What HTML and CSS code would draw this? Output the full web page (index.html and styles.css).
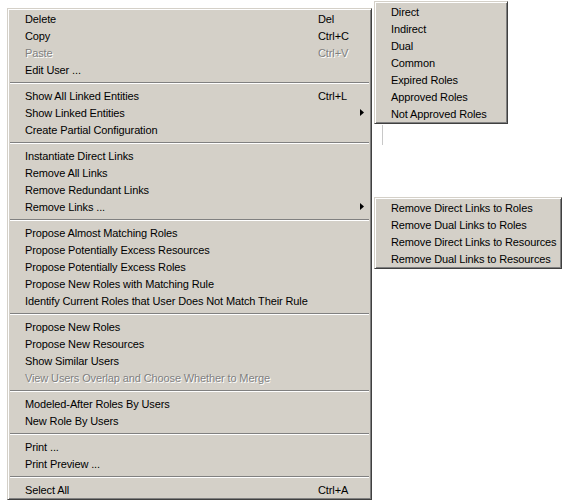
FILE: index.html
```html
<!DOCTYPE html>
<html>
<head>
<meta charset="utf-8">
<link rel="stylesheet" href="styles.css">
</head>
<body>
<div class="desk">
  <div class="menu main">
    <div class="item"><span class="label">Delete</span><span class="key">Del</span></div>
    <div class="item"><span class="label">Copy</span><span class="key">Ctrl+C</span></div>
    <div class="item disabled"><span class="label">Paste</span><span class="key">Ctrl+V</span></div>
    <div class="item"><span class="label">Edit User ...</span></div>
    <div class="sep"></div>
    <div class="item"><span class="label">Show All Linked Entities</span><span class="key">Ctrl+L</span></div>
    <div class="item"><span class="label">Show Linked Entities</span><svg class="arrow" width="4" height="7" viewBox="0 0 4 7"><polygon points="0,0 4,3.5 0,7" fill="#000"/></svg></div>
    <div class="item"><span class="label">Create Partial Configuration</span></div>
    <div class="sep"></div>
    <div class="item"><span class="label">Instantiate Direct Links</span></div>
    <div class="item"><span class="label">Remove All Links</span></div>
    <div class="item"><span class="label">Remove Redundant Links</span></div>
    <div class="item"><span class="label">Remove Links ...</span><svg class="arrow" width="4" height="7" viewBox="0 0 4 7"><polygon points="0,0 4,3.5 0,7" fill="#000"/></svg></div>
    <div class="sep"></div>
    <div class="item"><span class="label">Propose Almost Matching Roles</span></div>
    <div class="item"><span class="label">Propose Potentially Excess Resources</span></div>
    <div class="item"><span class="label">Propose Potentially Excess Roles</span></div>
    <div class="item"><span class="label">Propose New Roles with Matching Rule</span></div>
    <div class="item"><span class="label">Identify Current Roles that User Does Not Match Their Rule</span></div>
    <div class="sep"></div>
    <div class="item"><span class="label">Propose New Roles</span></div>
    <div class="item"><span class="label">Propose New Resources</span></div>
    <div class="item"><span class="label">Show Similar Users</span></div>
    <div class="item disabled"><span class="label">View Users Overlap and Choose Whether to Merge</span></div>
    <div class="sep"></div>
    <div class="item"><span class="label">Modeled-After Roles By Users</span></div>
    <div class="item"><span class="label">New Role By Users</span></div>
    <div class="sep"></div>
    <div class="item"><span class="label">Print ...</span></div>
    <div class="item"><span class="label">Print Preview ...</span></div>
    <div class="sep"></div>
    <div class="item"><span class="label">Select All</span><span class="key">Ctrl+A</span></div>
  </div>

  <div class="menu sub sub-linked">
    <div class="item"><span class="label">Direct</span></div>
    <div class="item"><span class="label">Indirect</span></div>
    <div class="item"><span class="label">Dual</span></div>
    <div class="item"><span class="label">Common</span></div>
    <div class="item"><span class="label">Expired Roles</span></div>
    <div class="item"><span class="label">Approved Roles</span></div>
    <div class="item"><span class="label">Not Approved Roles</span></div>
  </div>
  <div class="trace"></div>

  <div class="menu sub sub-remove">
    <div class="item"><span class="label">Remove Direct Links to Roles</span></div>
    <div class="item"><span class="label">Remove Dual Links to Roles</span></div>
    <div class="item"><span class="label">Remove Direct Links to Resources</span></div>
    <div class="item"><span class="label">Remove Dual Links to Resources</span></div>
  </div>
</div>
</body>
</html>
```

FILE: styles.css
```css
html, body {
  margin: 0;
  padding: 0;
  background: #fff;
}

.desk {
  position: relative;
  width: 562px;
  height: 504px;
  overflow: hidden;
  font-family: "Liberation Sans", Arial, sans-serif;
  font-size: 11px;
  letter-spacing: -0.12px;
  color: #000;
}

.menu {
  position: absolute;
  box-sizing: border-box;
  display: flex;
  flex-direction: column;
  background: #d4d0c8;
  border: 1px solid;
  border-color: #d4d0c8 #404040 #404040 #d4d0c8;
  box-shadow: inset 1px 1px #fff, inset -1px -1px #808080;
  padding: 1px;
}

.main {
  left: 7px;
  top: 8px;
  width: 365px;
}

.sub-linked {
  left: 374px;
  top: 1px;
  width: 134px;
}

.sub-remove {
  left: 374px;
  top: 197px;
  width: 188px;
}

.trace {
  position: absolute;
  left: 382px;
  top: 125px;
  width: 1px;
  height: 20px;
  background: #c8c8c8;
}

.item {
  display: flex;
  align-items: center;
  height: 17px;
  padding-left: 16px;
  padding-right: 6px;
  white-space: nowrap;
}

.sub .item {
  padding-left: 15px;
}

.main .label {
  width: 293px;
  flex: none;
}

.key {
  flex: none;
}

.arrow {
  margin-left: auto;
  display: block;
}

.disabled {
  color: #808080;
  text-shadow: 1px 1px 0 #fff;
}

.sep {
  height: 9px;
  display: flex;
  flex-direction: column;
  justify-content: center;
  padding: 0 1px;
}

.sep::before {
  content: "";
  display: block;
  height: 1px;
  background: #808080;
  border-bottom: 1px solid #fff;
}
```
